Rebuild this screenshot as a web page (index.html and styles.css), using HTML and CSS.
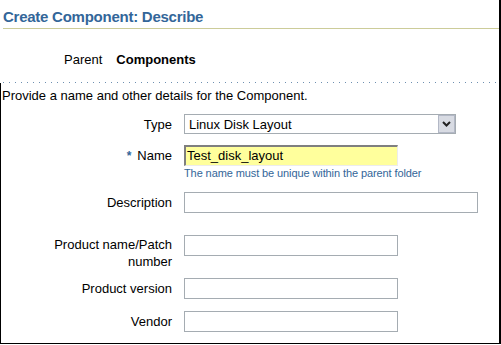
FILE: index.html
```html
<!DOCTYPE html>
<html>
<head>
<meta charset="utf-8">
<link rel="stylesheet" href="styles.css">
</head>
<body>
<div class="page">
  <div class="header"><div class="title">Create Component: Describe</div></div>
  <div class="parent"><span class="parent-label">Parent</span><span class="parent-value">Components</span></div>
  <div class="dots"></div>
  <div class="body">
    <p class="intro">Provide a name and other details for the Component.</p>
    <div class="form">
      <div class="row row-type">
        <span class="lbl">Type</span>
        <div class="select">
          <span class="select-text">Linux Disk Layout</span>
          <span class="select-btn"><svg width="9" height="6" viewBox="0 0 9 6"><path d="M1 1 L4.5 4.5 L8 1" fill="none" stroke="#222" stroke-width="2"/></svg></span>
        </div>
      </div>
      <div class="row row-name">
        <span class="lbl"><span class="req">*</span>Name</span>
        <div class="field">
          <div class="input input-name">Test_disk_layout</div>
          <div class="hint">The name must be unique within the parent folder</div>
        </div>
      </div>
      <div class="row row-desc">
        <span class="lbl">Description</span>
        <div class="input input-wide"></div>
      </div>
      <div class="row row-top row-prod">
        <span class="lbl lbl-two">Product name/Patch<br>number</span>
        <div class="input input-mid"></div>
      </div>
      <div class="row row-ver">
        <span class="lbl">Product version</span>
        <div class="input input-mid"></div>
      </div>
      <div class="row row-vendor">
        <span class="lbl">Vendor</span>
        <div class="input input-mid"></div>
      </div>
    </div>
  </div>
</div>
</body>
</html>
```
FILE: styles.css
```css
* { box-sizing: border-box; }
html, body { margin: 0; padding: 0; background: #fff; }
body { font-family: "Liberation Sans", Arial, sans-serif; font-size: 13px; color: #000; }
.page {
  width: 501px;
  height: 344px;
  border-right: 2px solid #000;
  border-bottom: 1px solid #000;
  display: flex;
  flex-direction: column;
}
.page > * { flex-shrink: 0; }
.header {
  margin-left: 3px;
  padding-top: 8px;
  padding-bottom: 2px;
  border-bottom: 1px solid #cccc99;
}
.title {
  font-size: 15px;
  line-height: 18px;
  font-weight: bold;
  color: #336699;
  letter-spacing: -0.25px;
}
.parent {
  display: flex;
  gap: 14px;
  margin-top: 23px;
  padding-left: 64px;
  line-height: 15px;
}
.parent-value { font-weight: bold; }
.dots {
  margin-top: 15px;
  height: 1px;
  background-image: linear-gradient(to right, #6e8fb0 1px, transparent 1px);
  background-size: 6px 1px;
  background-position: 3px 0;
  background-repeat: repeat-x;
}
.body {
  flex: 1 1 auto;
  border-left: 1px solid #000;
  padding-top: 5px;
}
.intro { margin: 0 0 0 1px; line-height: 15px; }
.form { display: flex; flex-direction: column; }
.row {
  display: grid;
  grid-template-columns: 171px auto;
  column-gap: 12px;
  align-items: center;
  justify-items: start;
}
.row-top { align-items: start; }
.lbl { justify-self: end; text-align: right; line-height: 15px; font-weight: normal; }
.lbl-two { line-height: 17px; padding-top: 1px; }
.req { color: #336699; font-weight: bold; margin-right: 6px; font-size: 12px; }
.row-type { margin-top: 11px; }
.row-name { margin-top: 11px; align-items: start; }
.row-name .lbl { margin-top: 3px; }
.row-desc { margin-top: 12px; }
.row-prod { margin-top: 22px; }
.row-ver { margin-top: 8px; }
.row-vendor { margin-top: 12px; }
.select {
  width: 272px;
  height: 20px;
  border: 1px solid #a5acb2;
  display: flex;
  align-items: center;
  justify-content: space-between;
  padding-left: 4px;
}
.select-text { line-height: 15px; }
.select-btn {
  width: 17px;
  height: 18px;
  background: #d8dbe3;
  border: 1px solid #b3b8c6;
  display: flex;
  align-items: center;
  justify-content: center;
}
.input {
  height: 21px;
  border: 1px solid #a5acb2;
  background: #fff;
}
.input-name {
  width: 214px;
  background: #ffff9c;
  border-top: 2px solid #7f7f7f;
  border-left: 2px solid #7f7f7f;
  border-right: 1px solid #ececec;
  border-bottom: 1px solid #ececec;
  padding-left: 1px;
  line-height: 17px;
}
.input-wide { width: 294px; }
.input-mid { width: 214px; }
.hint {
  margin-top: 1px;
  font-size: 11px;
  line-height: 13px;
  color: #336699;
  letter-spacing: -0.1px;
}
```
